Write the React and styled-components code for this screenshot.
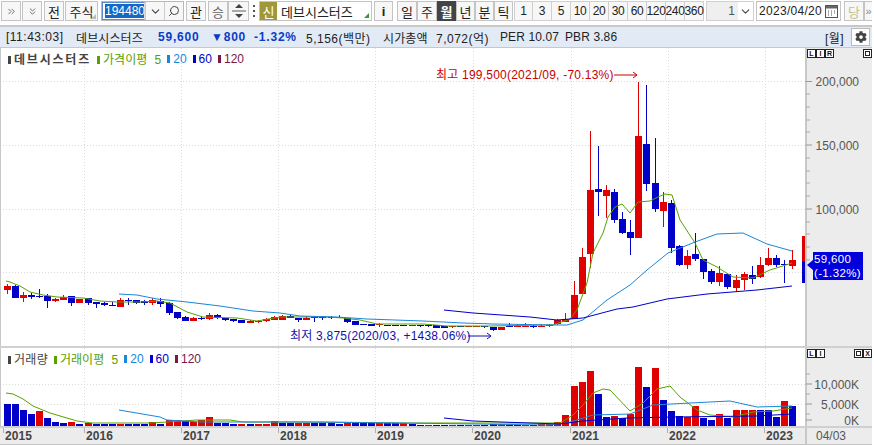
import React from "react";
import styled, { createGlobalStyle } from "styled-components";
import { ChevronDown, ChevronsDown, ChevronsRight, Search } from "lucide-react";
import { FaCog } from "react-icons/fa";

const RED = "#e00000";
const BLUE = "#0000c8";
const FONT = `"Liberation Sans", "Noto Sans CJK KR", sans-serif`;

// top, bottom, high, low, colour - in page pixels
const candles = [
	[286, 290, 284, 294, "r"], [286, 298, 285, 298, "b"], [295, 298, 292, 302, "r"], [295, 297, 293, 299, "b"],
	[296, 297, 289, 298, "b"], [296, 301, 294, 308, "b"], [299, 301, 298, 302, "r"], [297, 300, 295, 300, "r"],
	[296, 303, 296, 306, "b"], [299, 303, 299, 303, "r"], [298, 303, 298, 305, "b"], [302, 304, 302, 308, "b"],
	[303, 305, 302, 306, "b"], [305, 306, 302, 306, "b"], [300, 307, 298, 307, "r"], [300, 301, 298, 305, "b"],
	[300, 303, 300, 304, "b"], [301, 303, 300, 305, "b"], [300, 303, 298, 305, "r"], [301, 304, 298, 307, "b"],
	[303, 313, 302, 315, "b"], [312, 318, 312, 319, "b"], [317, 321, 316, 321, "b"], [318, 321, 317, 321, "r"],
	[318, 319, 316, 320, "b"], [315, 319, 313, 320, "r"], [315, 318, 314, 319, "b"], [318, 320, 318, 321, "b"],
	[319, 321, 319, 322, "b"], [320, 323, 320, 323, "b"], [321, 323, 320, 323, "r"], [321, 322, 320, 323, "r"],
	[319, 321, 318, 322, "r"], [317, 320, 316, 320, "r"],
	[316, 320, 315, 320, "r"], [316, 318, 315, 318, "b"], [318, 320, 318, 322, "b"], [318, 320, 316, 320, "r"],
	[317, 318, 316, 322, "b"], [317, 317, 316, 320, "b"], [317, 317, 316, 319, "b"], [317, 318, 315, 318, "r"],
	[318, 322, 318, 323, "b"], [321, 325, 321, 325, "b"], [324, 325, 324, 325, "b"], [324, 326, 324, 326, "b"],
	[324, 325, 323, 327, "r"], [325, 326, 325, 326, "b"], [325, 326, 325, 326, "b"], [325, 326, 325, 326, "b"],
	[325, 326, 325, 326, "r"], [325, 326, 325, 327, "b"], [325, 326, 325, 327, "b"], [325, 328, 325, 328, "b"],
	[326, 328, 326, 328, "b"], [326, 327, 326, 328, "r"], [326, 327, 326, 327, "b"], [326, 327, 326, 327, "r"],
	[326, 327, 326, 327, "r"], [326, 327, 326, 328, "b"], [327, 330, 327, 331, "b"], [327, 330, 327, 330, "r"],
	[326, 327, 323, 327, "b"], [326, 326, 324, 327, "r"], [326, 327, 323, 327, "r"], [326, 326, 325, 328, "b"],
	[326, 327, 324, 327, "r"],
	[325, 326, 324, 327, "r"], [320, 324, 319, 325, "r"], [319, 322, 313, 322, "r"], [295, 319, 281, 319, "r"],
	[257, 294, 248, 294, "r"], [190, 254, 131, 268, "r"], [189, 192, 146, 216, "b"], [190, 196, 185, 218, "r"],
	[192, 220, 189, 223, "b"], [219, 233, 212, 234, "b"], [232, 238, 220, 255, "b"], [136, 238, 82, 238, "r"],
	[144, 184, 85, 191, "b"], [183, 209, 138, 212, "b"], [202, 211, 192, 227, "r"], [203, 248, 200, 253, "b"],
	[246, 265, 245, 266, "b"], [256, 265, 250, 269, "r"], [254, 259, 233, 261, "b"], [259, 272, 259, 279, "b"],
	[271, 282, 269, 284, "b"], [273, 282, 266, 286, "r"], [274, 287, 274, 289, "b"], [280, 288, 275, 292, "r"],
	[274, 280, 272, 290, "r"], [275, 279, 266, 284, "b"], [265, 277, 257, 278, "r"], [258, 265, 248, 266, "r"],
	[258, 265, 255, 267, "b"], [264, 265, 260, 283, "b"], [260, 266, 250, 269, "r"],
];

const volumes = [
	[404, "b"], [404, "b"], [410, "b"], [414, "b"], [411, "r"], [418, "b"], [422, "b"], [423, "b"], [422, "r"], [424, "b"],
	[423, "r"], [424, "b"], [424, "b"], [424, "b"], [424, "r"], [424, "b"], [424, "b"], [424, "b"], [422, "r"], [424, "b"],
	[420, "r"], [420, "r"], [421, "b"], [422, "r"], [420, "r"], [417, "r"], [423, "b"], [423, "b"], [424, "b"], [424, "r"],
	[424, "b"], [424, "r"], [424, "r"], [421, "r"], [423, "b"], [423, "b"], [423, "r"], [423, "r"], [423, "b"], [423, "b"],
	[423, "b"], [424, "b"], [423, "r"], [423, "b"], [423, "b"], [423, "b"], [423, "r"], [423, "b"], [423, "b"], [423, "r"],
	[424, "b"], [425, "b"], [425, "r"], [425, "b"], [425, "b"], [425, "r"], [425, "b"], [425, "r"], [425, "r"], [425, "b"],
	[424, "b"], [424, "r"], [425, "b"], [425, "b"], [425, "r"], [425, "b"], [424, "r"],
	[424, "r"], [422, "r"], [415, "r"], [386, "r"], [382, "r"], [371, "r"], [394, "b"], [417, "b"], [416, "r"], [418, "b"],
	[414, "r"], [367, "r"], [387, "b"], [368, "r"], [400, "b"], [411, "b"], [416, "b"], [417, "r"], [406, "r"], [418, "b"],
	[420, "b"], [414, "r"], [418, "b"], [410, "r"], [410, "r"], [410, "r"], [410, "b"], [410, "b"], [417, "b"], [401, "r"], [406, "b"],
];

const priceLines = [
	{
		color: "#58a000",
		points: "6,281 10,282 20,286 30,292 43,295 57,297 83,298 100,301 117,302 140,302 157,301 170,303 187,312 203,317 237,318 257,321 280,317 327,317 343,318 360,320 377,324 423,324 447,326 490,326 547,325 553,325 570,319 577,310 587,283 593,253 603,233 608,217 615,207 622,204 630,213 638,202 650,201 658,197 665,194 672,195 680,220 695,243 703,260 717,267 733,277 753,278 770,270 792,263",
	},
	{
		color: "#1a86d8",
		points: "119,294 137,295 157,299 187,302 220,306 253,311 280,313 300,316 337,317 367,319 423,321 463,323 493,324 557,325 567,325 583,320 607,300 630,285 647,270 668,253 695,242 717,234 743,233 767,244 792,251",
	},
	{
		color: BLUE,
		points: "444,310 473,313 530,317 557,320 583,318 617,309 633,307 667,299 707,294 757,290 792,286",
	},
];

const volumeLines = [
	{
		color: "#58a000",
		points: "6,393 13,394 23,399 33,406 50,413 77,421 92,423 150,423 167,422 197,420 230,420 243,422 327,422 400,423 547,423 560,423 573,415 583,405 593,393 603,389 610,390 630,411 643,403 657,389 670,386 680,397 697,410 710,415 733,417 753,412 773,411 792,408",
	},
	{
		color: "#1a86d8",
		points: "119,410 160,417 167,420 200,422 300,422 400,423 547,425 567,423 593,415 630,414 653,405 690,403 730,401 757,407 792,406",
	},
	{
		color: BLUE,
		points: "444,418 473,421 530,423 560,424 583,421 627,418 673,417 757,416 792,414",
	},
];

const gridX = [84, 181, 278, 375, 473, 571, 668, 765];
const candleX = (i) => Math.round(6.5 + 8.1 * i);
const colorOf = (c) => (c === "r" ? RED : BLUE);

const periods = ["1", "3", "5", "10", "20", "30", "60", "120", "240", "360"];
const priceLabels = [
	["200,000", 81.5],
	["150,000", 145],
	["100,000", 209],
];
const volumeLabels = [
	["10,000K", 384],
	["5,000K", 404],
	["0K", 420],
];
const years = [
	[2015, 81],
	[2016, 97],
	[2017, 97],
	[2018, 97],
	[2019, 97],
	[2020, 98],
	[2021, 97],
	[2022, 97],
	[2023, 40],
];

function Grid({ rows, top, height }) {
	return (
		<g stroke="#dcdcdc" strokeDasharray="1 2" strokeWidth="1">
			{rows.map((y) => (
				<line key={y} x1="0" x2="805" y1={y} y2={y} />
			))}
			{gridX.map((x) => (
				<line key={x} x1={x} x2={x} y1={top} y2={top + height} />
			))}
		</g>
	);
}

function Lines({ lines }) {
	return lines.map((l) => (
		<polyline key={l.color} points={l.points} fill="none" stroke={l.color} strokeWidth="1" />
	));
}

function Legend({ title, average }) {
	return (
		<LegendRow>
			<LegendTitle $wide={title.length > 3}>
				<Mark $color="#444" />
				{title}
			</LegendTitle>
			<LegendItem $color="#58a000">
				<Mark $color="#58a000" />
				{average} <Five>5</Five>
			</LegendItem>
			<LegendItem $color="#1a86d8">
				<Mark $color="#1a86d8" />
				20
			</LegendItem>
			<LegendItem $color={BLUE}>
				<Mark $color={BLUE} />
				60
			</LegendItem>
			<LegendItem $color="#7a1848">
				<Mark $color="#7a1848" />
				120
			</LegendItem>
		</LegendRow>
	);
}

function AxisTicks({ top, height, labels, minor }) {
	return (
		<svg width="67" height={height} viewBox={`805 ${top} 67 ${height}`}>
			{minor.map((y) => (
				<line key={y} x1="806" x2="810" y1={y} y2={y} stroke="#aaa" />
			))}
			{labels.map(([text, y]) => (
				<g key={text}>
					<line x1="806" x2="812" y1={y} y2={y} stroke="#999" />
					<AxisText x="859" y={y + 4.5} textAnchor="end">
						{text}
					</AxisText>
				</g>
			))}
		</svg>
	);
}

function Arrow({ x1, x2, y, color }) {
	return (
		<g stroke={color} fill="none" shapeRendering="auto">
			<path d={`M${x1} ${y}H${x2}`} />
			<path d={`M${x2 - 4} ${y - 3}L${x2} ${y}L${x2 - 4} ${y + 3}`} />
		</g>
	);
}

export default function App() {
	return (
		<Page>
			<GlobalStyle />
			<Toolbar>
				<Btn $w={20} $ml={1}>
					<ChevronsRight size={11} color="#666" />
				</Btn>
				<Btn $w={20} $ml={1}>
					<ChevronsDown size={11} color="#666" />
				</Btn>
				<Btn $w={20} $ml={2}>전</Btn>
				<Btn $w={33} $ml={1}>주식<Corner /></Btn>
				<CodeBox>
					<CodeInput>
						<Selected>194480</Selected>
					</CodeInput>
					<CodeButton>
						<ChevronDown size={13} color="#444" />
					</CodeButton>
					<CodeButton>
						<Search size={12} color="#444" style={{ transform: "scaleX(-1)" }} />
					</CodeButton>
				</CodeBox>
				<Btn $w={20} $ml={2}>관</Btn>
				<Btn $w={20} $ml={2} $color="#666">승</Btn>
				<Btn $w={21}>
					<svg width="14" height="16" viewBox="0 0 14 16">
						<path d="M7 1 L11 5 H3 Z M7 15 L11 11 H3 Z" fill="#444" />
						<path d="M0 8 H14" stroke="#aaa" strokeWidth="2" />
					</svg>
				</Btn>
				<Dots>
					<i />
					<i />
					<i />
				</Dots>
				<NameBox>
					<NewBadge>신</NewBadge>
					<span>데브시스터즈</span>
					<GreenCorner />
				</NameBox>
				<Btn $w={19} $ml={2} $bold>i</Btn>
				<Btn $w={20} $ml={4}>일</Btn>
				<Btn $w={20}>주</Btn>
				<Btn $w={19} $active>월</Btn>
				<Btn $w={19}>년</Btn>
				<Btn $w={19}>분</Btn>
				<Btn $w={19}>틱</Btn>
				<PeriodGroup>
					{periods.map((p) => (
						<Period key={p}>{p}</Period>
					))}
				</PeriodGroup>
				<CountBox>
					<CountValue>1</CountValue>
					<ChevronDown size={13} color="#444" />
				</CountBox>
				<DateBox>
					<span>2023/04/20</span>
					<svg width="13" height="13" viewBox="0 0 13 13">
						<rect x="0.5" y="0.5" width="12" height="12" fill="#fff" stroke="#555" />
						<rect x="1" y="1" width="11" height="2.5" fill="#666" />
						<path d="M3 6h1m2 0h1m2 0h1M3 8h1m2 0h1m2 0h1M3 10h1m2 0h1" stroke="#555" />
					</svg>
				</DateBox>
				<Btn $w={20} $ml={3} $color="#c4bd8a">당</Btn>
				<Btn $w={9}>
					<More>»</More>
				</Btn>
			</Toolbar>

			<InfoBar>
				<InfoItem $w={70} $spaced>[11:43:03]</InfoItem>
				<InfoItem $w={82}>데브시스터즈</InfoItem>
				<InfoItem $w={53} $color="#0a3cc8" $bold>59,600</InfoItem>
				<InfoItem $w={43} $color="#0a3cc8" $bold>▼800</InfoItem>
				<InfoItem $w={52} $color="#0a3cc8" $bold>-1.32%</InfoItem>
				<InfoItem $w={77} $spaced>5,156(백만)</InfoItem>
				<InfoItem $w={53}>시가총액</InfoItem>
				<InfoItem $w={64} $spaced>7,072(억)</InfoItem>
				<InfoItem $w={65}>PER 10.07</InfoItem>
				<InfoItem $w={260}>PBR 3.86</InfoItem>
				<InfoItem $w={26} $spaced>[월]</InfoItem>
				<GearButton>
					<FaCog size={12} color="#444" />
				</GearButton>
			</InfoBar>

			<Pane $h={300}>
				<Plot>
					<Legend title="데브시스터즈" average="가격이평" />
					<svg width="804" height="300" viewBox="1 48 804 300" shapeRendering="crispEdges">
						<Grid rows={[81.5, 145, 209, 272.5]} top={48} height={300} />
						{candles.map(([t, b, h, l, c], i) => (
							<g key={i} fill={colorOf(c)}>
								<rect x={candleX(i)} y={h} width="1" height={l - h} />
								<rect x={candleX(i) - 3} y={t} width="7" height={Math.max(b - t, 1)} />
							</g>
						))}
						<g shapeRendering="auto">
							<Lines lines={priceLines} />
						</g>
						<rect x="802" y="236" width="3" height="25" fill={RED} />
						<rect x="802" y="261" width="3" height="22" fill={BLUE} />
						<Note x="436" y="79" fill="#c80000">최고 199,500(2021/09, -70.13%)</Note>
						<Arrow x1={614} x2={637} y={75} color="#c80000" />
						<Note x="290" y="340" fill="#1010b0">최저 3,875(2020/03, +1438.06%)</Note>
						<Arrow x1={468} x2={491} y={336} color="#1010b0" />
					</svg>
				</Plot>
				<Axis>
					<AxisTicks
						top={48}
						height={300}
						labels={priceLabels}
						minor={[94, 107, 120, 132, 158, 171, 183, 196, 222, 234, 247, 260]}
					/>
					<BoxRow>
						<TinyGroup>
							<Tiny>L</Tiny>
							<Tiny>I</Tiny>
							<Tiny>R</Tiny>
						</TinyGroup>
						<Tiny><Square /></Tiny>
					</BoxRow>
					<PriceTag>
						<TagPointer />
						59,600
						<br />
						(-1.32%)
					</PriceTag>
				</Axis>
			</Pane>

			<Pane $h={80}>
				<Plot>
					<Legend title="거래량" average="거래이평" />
					<svg width="804" height="80" viewBox="1 348 804 80" shapeRendering="crispEdges">
						<Grid rows={[384, 404]} top={348} height={80} />
						{volumes.map(([t, c], i) => (
							<rect key={i} x={candleX(i) - 3} y={t} width="7" height={426 - t} fill={colorOf(c)} />
						))}
						<g shapeRendering="auto">
							<Lines lines={volumeLines} />
						</g>
					</svg>
				</Plot>
				<Axis>
					<AxisTicks top={348} height={80} labels={volumeLabels} minor={[374, 394, 414]} />
					<BoxRow>
						<TinyGroup>
							<Tiny>L</Tiny>
							<Tiny>I</Tiny>
						</TinyGroup>
						<TinyGroup>
							<Tiny><Square /></Tiny>
							<Tiny>X</Tiny>
						</TinyGroup>
					</BoxRow>
				</Axis>
			</Pane>

			<TimeRow>
				<TimeAxis>
					{years.map(([year, w]) => (
						<Year key={year} $w={w}>{year}</Year>
					))}
				</TimeAxis>
				<TimeCursor>04/03</TimeCursor>
			</TimeRow>
		</Page>
	);
}

const GlobalStyle = createGlobalStyle`
	html, body {
		margin: 0;
		padding: 0;
		background: #fff;
	}
	* {
		box-sizing: border-box;
	}
`;

const Page = styled.div`
	width: 872px;
	height: 445px;
	overflow: hidden;
	font-family: ${FONT};
	font-size: 12px;
	color: #333;
	background: #fff;
	border-bottom: 1px solid #c4c4c4;
`;

const Toolbar = styled.div`
	display: flex;
	align-items: flex-start;
	width: 874px;
	height: 27px;
	padding-top: 1px;
	border-bottom: 2px solid #c8c8c8;
`;

const Btn = styled.div`
	position: relative;
	display: flex;
	flex: none;
	align-items: center;
	justify-content: center;
	width: ${(p) => p.$w}px;
	height: 20px;
	margin-left: ${(p) => p.$ml || 0}px;
	border: 1px solid ${(p) => (p.$active ? "#444" : "#c4c4c4")};
	background: ${(p) => (p.$active ? "#444" : "#f7f7f7")};
	color: ${(p) => (p.$active ? "#fff" : p.$color || "#222")};
	font-weight: ${(p) => (p.$active || p.$bold ? 700 : 400)};
	font-size: 13px;
`;

const More = styled.span`
	color: #888;
	font-size: 11px;
`;

const Corner = styled.i`
	position: absolute;
	right: 1px;
	bottom: 1px;
	width: 0;
	height: 0;
	border-left: 5px solid transparent;
	border-bottom: 5px solid #bbb;
`;

const GreenCorner = styled(Corner)`
	border-bottom-color: #3a9a3a;
	right: 2px;
	bottom: 2px;
`;

const CodeBox = styled.div`
	display: flex;
	flex: none;
	width: 83px;
	height: 20px;
	margin-left: 3px;
	border: 1px solid #b8b8b8;
`;

const CodeInput = styled.div`
	width: 43px;
	padding: 1px 0 0 2px;
	overflow: hidden;
	white-space: nowrap;
	border: 1px solid #5a8ad0;
	border-right-color: #ddd;
`;

const Selected = styled.span`
	background: #1668c8;
	color: #fff;
	font-size: 12px;
`;

const CodeButton = styled.div`
	display: flex;
	align-items: center;
	justify-content: center;
	flex: 1;
	border-left: 1px solid #ccc;
	background: #f7f7f7;
`;

const Dots = styled.div`
	display: flex;
	flex: none;
	flex-direction: column;
	align-items: center;
	justify-content: center;
	gap: 3px;
	width: 9px;
	height: 20px;
	& i {
		width: 2px;
		height: 2px;
		background: #555;
	}
`;

const NameBox = styled.div`
	position: relative;
	display: flex;
	flex: none;
	align-items: center;
	gap: 4px;
	width: 113px;
	height: 20px;
	margin-left: 1px;
	border: 1px solid #c4c4c4;
	font-size: 13px;
	color: #222;
`;

const NewBadge = styled.span`
	display: flex;
	align-items: center;
	justify-content: center;
	width: 17px;
	height: 18px;
	background: #a09838;
	color: #fff;
`;

const PeriodGroup = styled.div`
	display: flex;
	flex: none;
	height: 20px;
	margin-left: 1px;
`;

const Period = styled.div`
	display: flex;
	align-items: center;
	justify-content: center;
	width: 19px;
	border: 1px solid #d0d0d0;
	border-left-width: 0;
	background: #f7f7f7;
	color: #222;
	font-size: 12px;
	letter-spacing: -0.4px;
	&:first-child {
		border-left-width: 1px;
	}
`;

const CountBox = styled.div`
	display: flex;
	flex: none;
	align-items: center;
	width: 48px;
	height: 20px;
	margin-left: 2px;
	padding-right: 1px;
	border: 1px solid #d0d0d0;
`;

const CountValue = styled.div`
	flex: 1;
	align-self: stretch;
	padding-right: 3px;
	text-align: right;
	line-height: 18px;
	background: #efefef;
	color: #555;
	margin-right: 1px;
`;

const DateBox = styled.div`
	display: flex;
	flex: none;
	align-items: center;
	justify-content: space-between;
	width: 85px;
	height: 20px;
	margin-left: 2px;
	padding: 0 2px 0 2px;
	border: 1px solid #c4c4c4;
	color: #222;
	font-size: 12px;
	letter-spacing: 0.3px;
`;

const InfoBar = styled.div`
	display: flex;
	align-items: center;
	height: 21px;
	padding-left: 6px;
	background: #e2ebf5;
	border-bottom: 1px solid #c8c8c8;
`;

const InfoItem = styled.div`
	flex: none;
	width: ${(p) => p.$w}px;
	color: ${(p) => p.$color || "#222"};
	font-weight: ${(p) => (p.$bold ? 700 : 400)};
	font-size: 12px;
	letter-spacing: ${(p) => (p.$bold ? 0.8 : p.$spaced ? 0.5 : 0.1)}px;
	white-space: nowrap;
`;

const GearButton = styled.div`
	display: flex;
	align-items: center;
	justify-content: center;
	width: 19px;
	height: 18px;
	border: 1px solid #bbb;
	background: #fff;
`;

const Pane = styled.div`
	display: flex;
	height: ${(p) => p.$h}px;
	border-bottom: 2px solid #d0d0d0;
`;

const Plot = styled.div`
	position: relative;
	flex: none;
	width: 805px;
	border-left: 1px solid #c8c8c8;
	& > svg {
		display: block;
	}
`;

const LegendRow = styled.div`
	position: absolute;
	top: 2px;
	left: 7px;
	display: flex;
	align-items: center;
	gap: 6px;
	font-size: 12px;
	white-space: nowrap;
`;

const Mark = styled.i`
	display: inline-block;
	width: 3px;
	height: 8px;
	margin-right: 3px;
	background: ${(p) => p.$color};
`;

const LegendTitle = styled.span`
	color: #444;
	font-weight: ${(p) => (p.$wide ? 700 : 400)};
	letter-spacing: ${(p) => (p.$wide ? 1.8 : 0.3)}px;
`;

const LegendItem = styled.span`
	color: ${(p) => p.$color};
`;

const Five = styled.span`
	margin-left: 4px;
`;

const Note = styled.text`
	font-family: ${FONT};
	font-size: 12px;
	letter-spacing: 0.22px;
`;

const Axis = styled.div`
	position: relative;
	flex: none;
	width: 67px;
	background: #ececec;
	border-left: 2px solid #c8c8c8;
	& > svg {
		display: block;
		margin-left: -2px;
	}
`;

const AxisText = styled.text`
	font-family: ${FONT};
	font-size: 12px;
	fill: #555;
`;

const BoxRow = styled.div`
	position: absolute;
	top: 1px;
	left: 0;
	right: 0;
	display: flex;
	justify-content: space-between;
`;

const TinyGroup = styled.div`
	display: flex;
`;

const Tiny = styled.div`
	display: flex;
	align-items: center;
	justify-content: center;
	width: 9px;
	height: 9px;
	border: 1px solid #222;
	background: #fff;
	color: #111;
	font-size: 7px;
	font-weight: 700;
`;

const Square = styled.i`
	width: 5px;
	height: 5px;
	border: 1px solid #222;
`;

const PriceTag = styled.div`
	position: absolute;
	top: 204px;
	left: 6px;
	width: 50px;
	height: 28px;
	padding-left: 1px;
	background: #0000dc;
	color: #fff;
	font-size: 11.5px;
	line-height: 14px;
	letter-spacing: 0.35px;
	white-space: nowrap;
`;

const TagPointer = styled.i`
	position: absolute;
	top: 8px;
	left: -6px;
	width: 0;
	height: 0;
	border-top: 5px solid transparent;
	border-bottom: 5px solid transparent;
	border-right: 6px solid #0000dc;
`;

const TimeRow = styled.div`
	display: flex;
	height: 16px;
`;

const TimeAxis = styled.div`
	display: flex;
	flex: none;
	width: 805px;
	background: #ececec;
	padding-left: 3px;
`;

const Year = styled.div`
	flex: none;
	width: ${(p) => p.$w}px;
	height: 16px;
	padding-left: 2px;
	background: linear-gradient(#b0b0b0, #b0b0b0) left top / 1px 5px no-repeat;
	color: #444;
	font-size: 12px;
	font-weight: 700;
	line-height: 17px;
	letter-spacing: 0.1px;
`;

const TimeCursor = styled.div`
	flex: 1;
	padding-left: 9px;
	background: #ececec;
	border-left: 2px solid #c8c8c8;
	color: #555;
	line-height: 17px;
`;
